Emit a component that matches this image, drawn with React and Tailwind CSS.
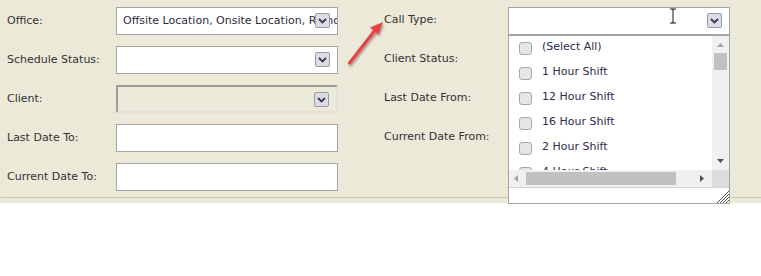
import React from 'react';

const font = "font-['DejaVu_Sans',Verdana,sans-serif]";

function DropButton() {
  return (
    <span className="absolute right-[7px] top-[5px] flex h-[15px] w-[15px] items-center justify-center rounded-[2px] border border-[#9a9aa4] bg-[#dcdce6]">
      <svg viewBox="0 0 9 6" className="h-[6px] w-[9px]">
        <path d="M1 1 L4.5 4.5 L8 1" fill="none" stroke="#3a3a48" strokeWidth="1.8" />
      </svg>
    </span>
  );
}

function Field({ value, select, disabled }) {
  return (
    <div
      className={
        'relative h-[28px] w-[222px] ' +
        (disabled
          ? 'border-2 border-b-[#e4e2d8] border-l-[#9c9c9c] border-r-[#e4e2d8] border-t-[#9c9c9c] bg-[#ecead8]'
          : 'border border-[#a5a5a5] bg-white')
      }
    >
      {value && (
        <div className="overflow-hidden whitespace-nowrap pl-[6px] pr-[20px] pt-[6px] text-[11px] leading-[14px] text-[#2e2a3e]">
          {value}
        </div>
      )}
      {select && <DropButton />}
    </div>
  );
}

const items = ['(Select All)', '1 Hour Shift', '12 Hour Shift', '16 Hour Shift', '2 Hour Shift', '4 Hour Shift'];

function CallTypePopup() {
  return (
    <div className="absolute left-0 top-[27px] z-10 w-[222px] border border-t-2 border-[#a5a5a5] bg-white">
      <div className="flex h-[134px]">
        <div className="flex-1 overflow-hidden">
          {items.map((t) => (
            <div key={t} className="flex h-[25px] items-center pl-[10px]">
              <span className="h-[13px] w-[13px] rounded-[3px] border border-[#a8a8a8] bg-[#e6e6e6]" />
              <span className="ml-[10px] -mt-[2px] text-[11px] text-[#2e2a4a]">{t}</span>
            </div>
          ))}
        </div>
        <div className="flex w-[17px] flex-col items-center bg-[#f0f0f0]">
          <svg viewBox="0 0 7 4" className="mt-[7px] h-[4px] w-[7px]"><path d="M0 4 L3.5 0 L7 4Z" fill="#a3a3a3" /></svg>
          <div className="mt-[6px] h-[17px] w-[13px] bg-[#c1c1c1]" />
          <div className="flex-1" />
          <svg viewBox="0 0 7 4" className="mb-[7px] h-[4px] w-[7px]"><path d="M0 0 L3.5 4 L7 0Z" fill="#505050" /></svg>
        </div>
      </div>
      <div className="flex h-[17px]">
        <div className="flex flex-1 items-center bg-[#f0f0f0]">
          <svg viewBox="0 0 4 7" className="ml-[5px] h-[7px] w-[4px]"><path d="M4 0 L0 3.5 L4 7Z" fill="#a3a3a3" /></svg>
          <div className="ml-[8px] h-[13px] w-[150px] bg-[#c1c1c1]" />
          <div className="flex-1" />
          <svg viewBox="0 0 4 7" className="mr-[8px] h-[7px] w-[4px]"><path d="M0 0 L4 3.5 L0 7Z" fill="#505050" /></svg>
        </div>
        <div className="w-[17px] bg-[#dcdcdc]" />
      </div>
      <div className="relative h-[16px] border-t border-[#d4d4d4]">
        <svg viewBox="0 0 13 13" className="absolute bottom-0 right-0 h-[13px] w-[13px]">
          <path d="M13 1 L1 13 M13 4 L4 13 M13 7 L7 13 M13 10 L10 13" stroke="#555" strokeWidth="1" />
        </svg>
      </div>
    </div>
  );
}

export default function App() {
  const left = [
    ['Office:', { value: 'Offsite Location, Onsite Location, Remote Location', select: true }],
    ['Schedule Status:', { select: true }],
    ['Client:', { select: true, disabled: true }],
    ['Last Date To:', {}],
    ['Current Date To:', {}],
  ];
  const right = ['Call Type:', 'Client Status:', 'Last Date From:', 'Current Date From:'];

  return (
    <div className={`relative h-[276px] w-[761px] bg-white ${font}`}>
      <div className="h-[203px] bg-[#ece9d8] pl-[1px]">
        <div className="flex h-[198px] border-b border-[#c9c6b8] pt-[7px]">
          <div className="flex flex-col gap-[11px]">
            {left.map(([label, f]) => (
              <div key={label} className="flex items-center">
                <div className="w-[115px] pl-[6px] text-[11px] text-[#333]">{label}</div>
                <Field {...f} />
              </div>
            ))}
          </div>
          <div className="ml-[46px] flex flex-col gap-[11px]">
            {right.map((label, i) => (
              <div key={label} className="flex h-[28px] items-center">
                <div className="w-[124px] -mt-[1px] text-[11px] text-[#333]">{label}</div>
                {i === 0 && (
                  <div className="relative">
                    <Field select />
                    <CallTypePopup />
                    <svg viewBox="0 0 8 16" className="absolute left-[161px] top-[1px] h-[16px] w-[8px]">
                      <path d="M1 1 H7 M4 1 V15 M1 15 H7" stroke="#111" strokeWidth="1" fill="none" />
                    </svg>
                  </div>
                )}
              </div>
            ))}
          </div>
        </div>
      </div>
      <svg className="absolute left-[340px] top-[15px] h-[60px] w-[50px]" viewBox="0 0 50 60">
        <defs>
          <filter id="sh" x="-50%" y="-50%" width="200%" height="200%">
            <feDropShadow dx="1" dy="2" stdDeviation="1.2" floodColor="#000" floodOpacity="0.35" />
          </filter>
        </defs>
        <g filter="url(#sh)">
          <path d="M9.5 48 L36 14" stroke="#e84242" strokeWidth="3.2" strokeLinecap="round" />
          <path d="M43 7 L30 12.5 L38.5 19.5 Z" fill="#e84242" />
        </g>
      </svg>
    </div>
  );
}
